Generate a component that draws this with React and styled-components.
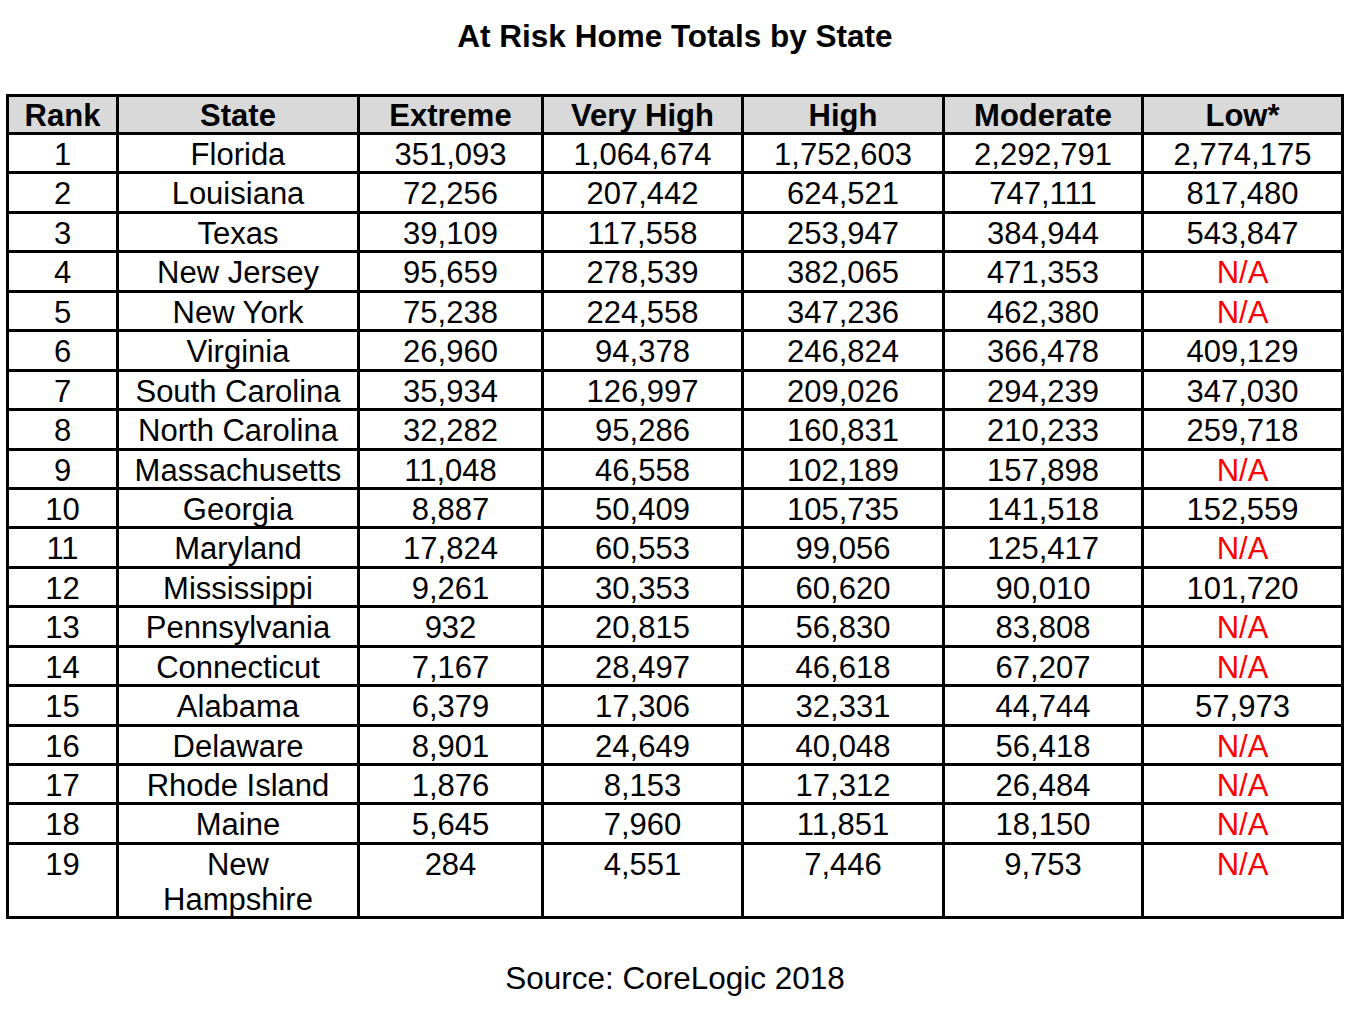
import React from "react";
import styled, { createGlobalStyle } from "styled-components";

const GlobalStyle = createGlobalStyle`
  html, body {
    margin: 0;
    padding: 0;
    background: #ffffff;
  }
  body {
    font-family: "Liberation Sans", Arial, sans-serif;
    color: #000000;
  }
`;

const Page = styled.div`
  width: 1338px;
  padding: 18px 0 0 6px;
  display: flex;
  flex-direction: column;
  align-items: stretch;
`;

const Title = styled.h1`
  margin: 0;
  font-size: 31.5px;
  line-height: 36px;
  font-weight: bold;
  text-align: center;
`;

const Grid = styled.div`
  margin-top: 40px;
  display: grid;
  grid-template-columns: 107px 238px 181px 197px 198px 196px 197px;
  grid-template-rows: 35px repeat(18, 36.44px) 71px;
  gap: 3px;
  padding: 3px;
  background: #000000;
  width: max-content;
`;

const HeaderCell = styled.div`
  background: #d9d9d9;
  padding-top: 2px;
  font-size: 31px;
  font-weight: bold;
  line-height: 34px;
  text-align: center;
  white-space: nowrap;
  overflow: hidden;
`;

const Cell = styled.div`
  background: #ffffff;
  padding-top: 2px;
  font-size: 31px;
  line-height: 35.5px;
  text-align: center;
  color: ${(p) => (p.$na ? "#ff0000" : "#000000")};
  white-space: pre-line;
  overflow: hidden;
`;

const Source = styled.p`
  margin: 41px 0 0;
  font-size: 31.5px;
  line-height: 36px;
  text-align: center;
`;

const headers = ["Rank", "State", "Extreme", "Very High", "High", "Moderate", "Low*"];

const rows = [
  ["1", "Florida", "351,093", "1,064,674", "1,752,603", "2,292,791", "2,774,175"],
  ["2", "Louisiana", "72,256", "207,442", "624,521", "747,111", "817,480"],
  ["3", "Texas", "39,109", "117,558", "253,947", "384,944", "543,847"],
  ["4", "New Jersey", "95,659", "278,539", "382,065", "471,353", "N/A"],
  ["5", "New York", "75,238", "224,558", "347,236", "462,380", "N/A"],
  ["6", "Virginia", "26,960", "94,378", "246,824", "366,478", "409,129"],
  ["7", "South Carolina", "35,934", "126,997", "209,026", "294,239", "347,030"],
  ["8", "North Carolina", "32,282", "95,286", "160,831", "210,233", "259,718"],
  ["9", "Massachusetts", "11,048", "46,558", "102,189", "157,898", "N/A"],
  ["10", "Georgia", "8,887", "50,409", "105,735", "141,518", "152,559"],
  ["11", "Maryland", "17,824", "60,553", "99,056", "125,417", "N/A"],
  ["12", "Mississippi", "9,261", "30,353", "60,620", "90,010", "101,720"],
  ["13", "Pennsylvania", "932", "20,815", "56,830", "83,808", "N/A"],
  ["14", "Connecticut", "7,167", "28,497", "46,618", "67,207", "N/A"],
  ["15", "Alabama", "6,379", "17,306", "32,331", "44,744", "57,973"],
  ["16", "Delaware", "8,901", "24,649", "40,048", "56,418", "N/A"],
  ["17", "Rhode Island", "1,876", "8,153", "17,312", "26,484", "N/A"],
  ["18", "Maine", "5,645", "7,960", "11,851", "18,150", "N/A"],
  ["19", "New\nHampshire", "284", "4,551", "7,446", "9,753", "N/A"],
];

export default function App() {
  return (
    <>
      <GlobalStyle />
      <Page>
        <Title>At Risk Home Totals by State</Title>
        <Grid>
          {headers.map((h) => (
            <HeaderCell key={h}>{h}</HeaderCell>
          ))}
          {rows.map((row, ri) =>
            row.map((v, ci) => (
              <Cell key={`${ri}-${ci}`} $na={v === "N/A"}>
                {v}
              </Cell>
            ))
          )}
        </Grid>
        <Source>Source: CoreLogic 2018</Source>
      </Page>
    </>
  );
}
